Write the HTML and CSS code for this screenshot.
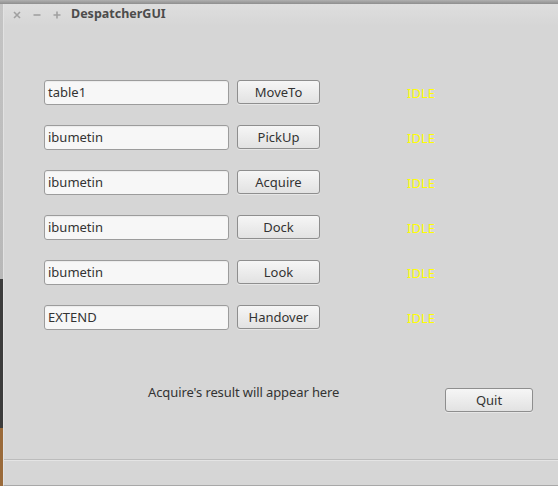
FILE: index.html
```
<!DOCTYPE html>
<html>
<head>
<meta charset="utf-8">
<link rel="stylesheet" href="styles.css">
</head>
<body>
<div class="desktop">
  <div class="taskbar"></div>
  <div class="lower">
    <div class="edge"></div>
    <div class="window">
      <div class="titlebar">
        <div class="wbtns">
          <svg width="8" height="8" viewBox="0 0 8 8"><path d="M1 1L7 7M7 1L1 7" stroke="#a0a0a0" stroke-width="1.6"/></svg>
          <svg width="8" height="8" viewBox="0 0 8 8"><path d="M0.5 4H7.5" stroke="#a0a0a0" stroke-width="1.6"/></svg>
          <svg width="8" height="8" viewBox="0 0 8 8"><path d="M0.5 4H7.5M4 0.5V7.5" stroke="#a0a0a0" stroke-width="1.6"/></svg>
        </div>
        <div class="title">DespatcherGUI</div>
      </div>
      <div class="content">
        <div class="rows">
          <div class="row"><div class="field">table1</div><div class="btn">MoveTo</div><div class="state">IDLE</div></div>
          <div class="row"><div class="field">ibumetin</div><div class="btn">PickUp</div><div class="state">IDLE</div></div>
          <div class="row"><div class="field">ibumetin</div><div class="btn">Acquire</div><div class="state">IDLE</div></div>
          <div class="row"><div class="field">ibumetin</div><div class="btn">Dock</div><div class="state">IDLE</div></div>
          <div class="row"><div class="field">ibumetin</div><div class="btn">Look</div><div class="state">IDLE</div></div>
          <div class="row"><div class="field">EXTEND</div><div class="btn">Handover</div><div class="state">IDLE</div></div>
        </div>
        <div class="bottom">
          <div class="result">Acquire's result will appear here</div>
          <div class="btn quit">Quit</div>
        </div>
      </div>
      <div class="status"></div>
    </div>
  </div>
</div>
</body>
</html>
```
FILE: styles.css
```
html, body {
  margin: 0;
  padding: 0;
}
body {
  width: 558px;
  height: 486px;
  overflow: hidden;
  font-family: "Noto Sans", "Open Sans", sans-serif;
  font-size: 13px;
  color: #333;
}
.desktop {
  width: 558px;
  height: 486px;
  display: flex;
  flex-direction: column;
  background: #3a3a3a;
}
.taskbar {
  height: 4px;
  background: linear-gradient(#b0b0b0, #8e8e8e);
  flex: none;
}
.lower {
  display: flex;
  flex: 1;
}
.edge {
  width: 3px;
  flex: none;
  background: linear-gradient(#c4c4c4 0%, #b8b8b8 57%, #3c3c3c 57%, #3c3c3c 88%, #9a6a3a 88%, #9a6a3a 100%);
}
.window {
  flex: 1;
  display: flex;
  flex-direction: column;
  background: #d6d6d6;
  border-left: 1px solid #e2e2e2;
  border-bottom: 1px solid #a8a8a8;
}
.titlebar {
  height: 22px;
  display: flex;
  align-items: center;
  background: linear-gradient(#dedede, #d6d6d6);
  flex: none;
}
.wbtns {
  display: flex;
  gap: 12px;
  margin-left: 9px;
  align-items: center;
}
.wbtns svg { display: block; }
.title {
  margin-left: 10px;
  font-weight: bold;
  font-size: 12.5px;
  color: #4c4c4c;
  line-height: 16px;
  margin-top: -2px;
}
.content {
  flex: 1;
  display: flex;
  flex-direction: column;
}
.rows {
  display: flex;
  flex-direction: column;
  gap: 20px;
  padding-top: 54px;
  padding-left: 40px;
}
.row {
  display: flex;
  align-items: center;
  height: 25px;
}
.field {
  width: 180px;
  height: 23px;
  border: 1px solid #9c9c9c;
  border-radius: 3px;
  background: #f7f7f7;
  padding-left: 3px;
  line-height: 23px;
  box-shadow: inset 0 1px 1px rgba(0,0,0,0.05);
}
.btn {
  width: 81px;
  height: 22px;
  border: 1px solid #8e8e8e;
  border-radius: 3px;
  background: linear-gradient(#f6f6f6, #e2e2e2);
  text-align: center;
  line-height: 22px;
  margin-left: 8px;
  margin-top: -1px;
  box-shadow: 0 1px 0 rgba(255,255,255,0.4);
}
.state {
  margin-left: 87px;
  color: #ffff00;
  line-height: 18px;
  margin-top: 0;
}
.bottom {
  display: flex;
  align-items: flex-start;
  margin-top: 53px;
  padding-left: 144px;
}
.result {
  line-height: 18px;
  letter-spacing: -0.1px;
}
.quit {
  width: 86px;
  margin-left: auto;
  margin-right: 25px;
  margin-top: 5px;
}
.status {
  height: 25px;
  flex: none;
  border-top: 1px solid #bcbcbc;
  box-shadow: inset 0 1px 0 #e4e4e4;
}
```
